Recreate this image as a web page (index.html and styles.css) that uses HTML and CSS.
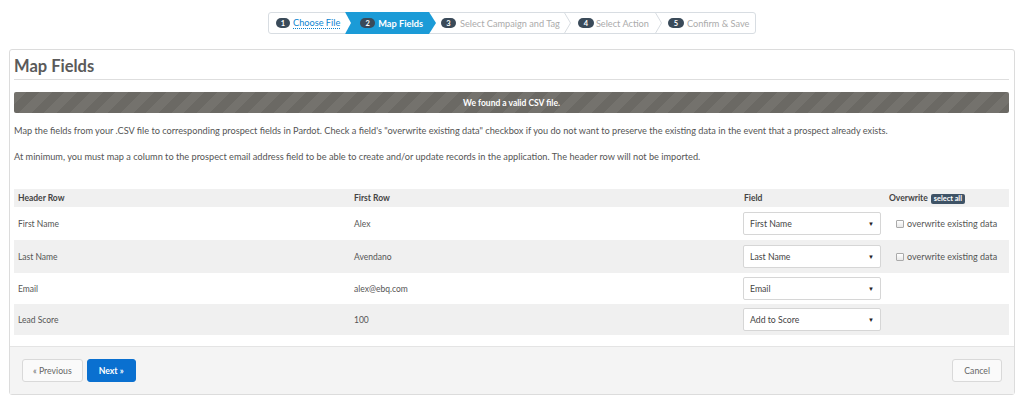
FILE: index.html
```html
<!DOCTYPE html>
<html>
<head>
<meta charset="utf-8">
<link rel="stylesheet" href="styles.css">
</head>
<body>
<div class="wizard-wrap">
  <ol class="wizard">
    <li class="step s1"><span class="num">1</span><a class="link">Choose File</a></li>
    <li class="step active"><span class="num">2</span><span>Map Fields</span></li>
    <li class="arrow"><svg width="7" height="22" viewBox="0 0 7 22"><polygon points="0,0 7,11 0,22" fill="#1b9bd7"/></svg></li>
    <li class="step s3"><span class="num">3</span><span>Select Campaign and Tag</span></li>
    <li class="sep"><svg width="7" height="22" viewBox="0 0 7 22"><polyline points="0,0 6.5,11 0,22" fill="none" stroke="#d8dde2" stroke-width="1"/></svg></li>
    <li class="step s4"><span class="num">4</span><span>Select Action</span></li>
    <li class="sep"><svg width="7" height="22" viewBox="0 0 7 22"><polyline points="0,0 6.5,11 0,22" fill="none" stroke="#d8dde2" stroke-width="1"/></svg></li>
    <li class="step s5"><span class="num">5</span><span>Confirm &amp; Save</span></li>
  </ol>
</div>
<div class="card">
  <div class="card-body">
    <h1 class="title">Map Fields</h1>
    <div class="alert">We found a valid CSV file.</div>
    <p class="text">Map the fields from your .CSV file to corresponding prospect fields in Pardot. Check a field's "overwrite existing data" checkbox if you do not want to preserve the existing data in the event that a prospect already exists.</p>
    <p class="text">At minimum, you must map a column to the prospect email address field to be able to create and/or update records in the application. The header row will not be imported.</p>
    <table class="grid">
      <thead>
        <tr><th class="c1">Header Row</th><th class="c2">First Row</th><th class="c3">Field</th><th class="c4">Overwrite <span class="badge">select all</span></th></tr>
      </thead>
      <tbody>
        <tr class="r1"><td>First Name</td><td>Alex</td><td><div class="select">First Name<span class="caret">&#9660;</span></div></td><td><label class="chk"><span class="box"></span>overwrite existing data</label></td></tr>
        <tr class="r2 alt"><td>Last Name</td><td>Avendano</td><td><div class="select">Last Name<span class="caret">&#9660;</span></div></td><td><label class="chk"><span class="box"></span>overwrite existing data</label></td></tr>
        <tr class="r3"><td>Email</td><td>alex@ebq.com</td><td><div class="select">Email<span class="caret">&#9660;</span></div></td><td></td></tr>
        <tr class="r4 alt"><td>Lead Score</td><td>100</td><td><div class="select">Add to Score<span class="caret">&#9660;</span></div></td><td></td></tr>
      </tbody>
    </table>
  </div>
  <div class="card-foot">
    <div class="left">
      <button class="btn">&laquo; Previous</button>
      <button class="btn primary">Next &raquo;</button>
    </div>
    <button class="btn cancel">Cancel</button>
  </div>
</div>
</body>
</html>
```
FILE: styles.css
```css
* { box-sizing: border-box; }
html, body { margin: 0; padding: 0; background: #fff; }
body {
  font-family: Lato, "Open Sans", "Liberation Sans", sans-serif;
  color: #555;
  width: 1024px;
  height: 408px;
  overflow: hidden;
}
.wizard-wrap {
  display: flex;
  padding: 12px 0 0 268px;
  height: 49px;
}
.wizard {
  display: flex;
  list-style: none;
  margin: 0;
  padding: 0;
  height: 22px;
  border: 1px solid #d8dde2;
  border-radius: 3px;
  background: #fff;
}
.wizard li { display: flex; align-items: center; }
.wizard svg { display: block; margin-top: -1px; }
.step {
  font-size: 9.2px;
  color: #ababab;
  height: 20px;
  white-space: nowrap;
}
.step .num {
  display: inline-flex;
  align-items: center;
  justify-content: center;
  width: 15px;
  height: 10px;
  border-radius: 5px;
  background: #3a4a59;
  color: #fff;
  font-size: 7.5px;
  font-weight: bold;
  margin-right: 3px;
}
.s1 { padding: 0 5px 0 7px; }
.s1 .num { width: 14px; }
.link {
  color: #0a84d1;
  border-bottom: 1px dotted #0a84d1;
  line-height: 10px;
}
.step.active {
  position: relative;
  background: #1b9bd7;
  color: #fff;
  font-weight: bold;
  padding: 0 6px 0 15px;
  height: 22px;
  margin-top: -1px;
  margin-bottom: -1px;
}
.step.active::before {
  content: "";
  position: absolute;
  left: 0;
  top: 0;
  border-top: 11px solid transparent;
  border-bottom: 11px solid transparent;
  border-left: 6px solid #fff;
}
.arrow { margin-top: -1px; }
.arrow svg { margin-top: 0; }
.s3 { padding: 0 4px 0 5px; }
.s3 .num { margin-right: 4px; }
.s4 { padding: 0 6px 0 7px; }
.s4 .num { width: 16px; margin-right: 2px; }
.s5 { padding: 0 6px 0 6px; }
.s5 .num { width: 16px; }

.card {
  margin: 0 9px;
  border: 1px solid #dcdcdc;
  border-radius: 3px;
  height: 346px;
  display: flex;
  flex-direction: column;
}
.card-body {
  padding: 5px 5px 0 4px;
  flex: 1;
}
.title {
  margin: 0;
  font-size: 16.5px;
  font-weight: bold;
  color: #5a5a5a;
  padding: 2px 0 4px 0;
  border-bottom: 1px solid #dedede;
  line-height: 18px;
}
.alert {
  margin-top: 12px;
  height: 21px;
  border-radius: 2px;
  background: #6f6d68 repeating-linear-gradient(135deg, #74726d 0 9px, #6b6964 9px 18px);
  color: #fff;
  font-size: 8.5px;
  font-weight: bold;
  display: flex;
  align-items: center;
  justify-content: center;
}
.text {
  margin: 12px 0 0 0;
  font-size: 9.2px;
  color: #555;
  line-height: 12px;
}
.text + .text { margin-top: 14px; }
.grid {
  margin-top: 26px;
  width: 100%;
  border-collapse: collapse;
  font-size: 8.5px;
}
.grid th {
  background: #f0f0f0;
  text-align: left;
  font-weight: bold;
  color: #444;
  height: 18px;
  padding: 0 4px;
}
.grid td {
  padding: 0 4px;
  color: #555;
}
.grid th.c1 { width: 336px; }
.grid th.c2 { width: 391px; }
.grid th.c3 { width: 141px; padding-left: 3px; }
.grid td:nth-child(3) { padding-left: 2px; }
.grid td:nth-child(4) { padding-left: 11px; }
.r1, .r2 { height: 33px; }
.r3, .r4 { height: 31px; }
tr.alt td { background: #f0f0f0; }
.badge {
  display: inline-block;
  background: #3f5366;
  color: #fff;
  font-size: 7.3px;
  font-weight: bold;
  padding: 1px 3px;
  border-radius: 2px;
  margin-left: 1px;
  line-height: 8px;
}
.select {
  width: 138px;
  height: 23px;
  border: 1px solid #d6d6d6;
  border-radius: 2px;
  background: #fff;
  display: flex;
  align-items: center;
  justify-content: space-between;
  padding: 0 6px 0 6px;
  font-size: 8.7px;
  color: #444;
}
.caret { font-size: 6px; color: #222; }
.chk {
  display: flex;
  align-items: center;
  gap: 3px;
  font-size: 9px;
  color: #555;
}
.box {
  width: 8px;
  height: 8px;
  border: 1px solid #aaa;
  border-radius: 1px;
  background: linear-gradient(#fff, #e8e8e8);
}
.card-foot {
  background: #f4f4f4;
  border-top: 1px solid #e4e4e4;
  height: 48px;
  display: flex;
  align-items: center;
  justify-content: space-between;
  padding: 0 12px 1px 12px;
}
.left { display: flex; gap: 4px; }
.btn {
  font-family: inherit;
  height: 23px;
  border: 1px solid #d9d9d9;
  border-radius: 3px;
  background: #fafafa;
  color: #666;
  font-size: 8.7px;
  padding: 0 10px;
}
.btn.primary {
  background: #0a70d0;
  border-color: #0a70d0;
  color: #fff;
  font-weight: bold;
  padding: 0 11px;
}
.btn.cancel { padding: 0 11px; }
```
